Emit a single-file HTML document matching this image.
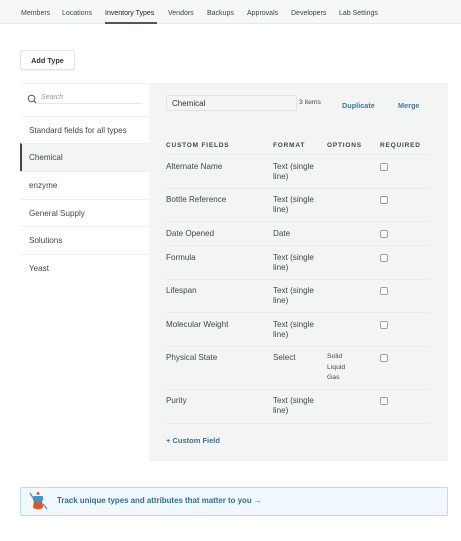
<!DOCTYPE html>
<html><head><meta charset="utf-8"><style>
*{margin:0;padding:0;box-sizing:border-box}
body{width:461px;height:541px;background:#fff;font-family:"Liberation Sans",sans-serif;color:#3c4a4a;position:relative;overflow:hidden;font-size:8.1px}
.a{position:absolute;white-space:nowrap}
.nav{position:absolute;left:0;top:0;width:461px;height:24px;background:#f6f7f7;border-bottom:1px solid #e4e7e7}
.nav span{position:absolute;top:10px;font-size:7px;color:#3a4646}
.side{position:absolute;left:20px;width:129px;border-top:1px solid #eef0f0;height:28px}
.side span{position:absolute;left:9px;top:9px;font-size:8.1px;color:#3c4848}
.panel{position:absolute;left:149px;top:83px;width:299px;height:378px;background:#f3f4f4}
.row{position:absolute;left:166px;width:263px;border-top:1px solid #e8ebeb}
.cb{position:absolute;width:8px;height:8px;border:1px solid #9aa3a3;border-radius:2px;background:#fff}
.h{font-size:6.5px;font-weight:bold;letter-spacing:.8px;color:#3c4848}
.l{line-height:10px}
</style></head><body>
<div class="nav">
<span style="left:21px">Members</span>
<span style="left:62px">Locations</span>
<span style="left:105px;color:#222">Inventory Types</span>
<span style="left:168px">Vendors</span>
<span style="left:207px">Backups</span>
<span style="left:247px">Approvals</span>
<span style="left:291px">Developers</span>
<span style="left:339px">Lab Settings</span>
<div style="position:absolute;left:105px;top:22px;width:52px;height:2px;background:#555"></div>
</div>
<div class="a" style="left:20px;top:50px;width:55px;height:20px;border:1px solid #e2e5e5;border-radius:2px;box-shadow:0 1px 1px rgba(0,0,0,.06);font-size:7.3px;font-weight:bold;text-align:center;line-height:19px;color:#333">Add Type</div>

<svg class="a" style="left:27px;top:94px" width="10" height="10" viewBox="0 0 10 10"><circle cx="4.5" cy="4.5" r="3.3" fill="none" stroke="#555" stroke-width="1"/><path d="M7 7l2.3 2.3" stroke="#555" stroke-width="1"/></svg>
<div class="a" style="left:41px;top:94px;font-style:italic;font-size:7px;color:#999">Search</div>
<div class="a" style="left:36px;top:103px;width:106px;border-top:1px solid #e6e9e9"></div>
<div class="side" style="top:116px;height:27px"><span>Standard fields for all types</span></div>
<div class="side" style="top:143px;background:#f3f4f4;border-left:2px solid #444"><span style="left:7px">Chemical</span></div>
<div class="side" style="top:171px"><span>enzyme</span></div>
<div class="side" style="top:199px"><span>General Supply</span></div>
<div class="side" style="top:226px"><span>Solutions</span></div>
<div class="side" style="top:254px"><span>Yeast</span></div>
<div class="a" style="left:20px;top:83px;width:129px;border-top:1px solid #eef0f0"></div>

<div class="panel"></div>
<div class="a" style="left:166px;top:95px;width:131px;height:16px;border:1px solid #dfe3e3;border-radius:2px;background:#f3f4f4;font-size:8px;padding:2.5px 5px;color:#333">Chemical</div>
<div class="a" style="left:299px;top:99px;font-size:6.8px;color:#444">3 items</div>
<div class="a" style="left:342px;top:101px;font-size:7.3px;font-weight:bold;color:#3d7da0">Duplicate</div>
<div class="a" style="left:398px;top:101px;font-size:7.3px;font-weight:bold;color:#3d7da0">Merge</div>

<div class="a h" style="left:166px;top:142px">CUSTOM FIELDS</div>
<div class="a h" style="left:273px;top:142px">FORMAT</div>
<div class="a h" style="left:327px;top:142px">OPTIONS</div>
<div class="a h" style="left:380px;top:142px">REQUIRED</div>

<div class="row" style="top:154px"></div>
<div class="a" style="left:166px;top:162px">Alternate Name</div><div class="a l" style="left:273px;top:162px">Text (single<br>line)</div><div class="cb" style="left:380px;top:163px"></div>
<div class="row" style="top:188px"></div>
<div class="a" style="left:166px;top:195px">Bottle Reference</div><div class="a l" style="left:273px;top:195px">Text (single<br>line)</div><div class="cb" style="left:380px;top:196px"></div>
<div class="row" style="top:221px"></div>
<div class="a" style="left:166px;top:229px">Date Opened</div><div class="a" style="left:273px;top:229px">Date</div><div class="cb" style="left:380px;top:230px"></div>
<div class="row" style="top:245px"></div>
<div class="a" style="left:166px;top:253px">Formula</div><div class="a l" style="left:273px;top:253px">Text (single<br>line)</div><div class="cb" style="left:380px;top:254px"></div>
<div class="row" style="top:279px"></div>
<div class="a" style="left:166px;top:286px">Lifespan</div><div class="a l" style="left:273px;top:286px">Text (single<br>line)</div><div class="cb" style="left:380px;top:287px"></div>
<div class="row" style="top:312px"></div>
<div class="a" style="left:166px;top:320px">Molecular Weight</div><div class="a l" style="left:273px;top:320px">Text (single<br>line)</div><div class="cb" style="left:380px;top:321px"></div>
<div class="row" style="top:346px"></div>
<div class="a" style="left:166px;top:353px">Physical State</div><div class="a" style="left:273px;top:353px">Select</div><div class="a" style="left:327px;top:352px;font-size:6.8px;line-height:10.5px">Solid<br>Liquid<br>Gas</div><div class="cb" style="left:380px;top:354px"></div>
<div class="row" style="top:389px"></div>
<div class="a" style="left:166px;top:396px">Purity</div><div class="a l" style="left:273px;top:396px">Text (single<br>line)</div><div class="cb" style="left:380px;top:397px"></div>
<div class="row" style="top:423px"></div>
<div class="a" style="left:166px;top:436px;font-size:7.5px;font-weight:bold;color:#3d7090">+ Custom Field</div>

<div class="a" style="left:20px;top:487px;width:428px;height:29px;border:1px solid #b9dced;border-radius:2px;background:#f0f8fd"></div>
<svg class="a" style="left:27px;top:490px" width="24" height="22" viewBox="0 0 24 22"><rect x="6" y="6" width="10" height="5" rx="1" fill="#3a97cf"/><circle cx="11" cy="3.5" r="1.5" fill="#e2572a"/><path d="M7 11h8l1 6c0 3-10 3-10 0z" fill="#e2572a"/><path d="M3 3l3 5M16 14l4 5" stroke="#3a97cf" stroke-width="1.3"/></svg>
<div class="a" style="left:57px;top:496px;font-size:7.9px;font-weight:bold;color:#2f6f8f">Track unique types and attributes that matter to you →</div>
</body></html>
